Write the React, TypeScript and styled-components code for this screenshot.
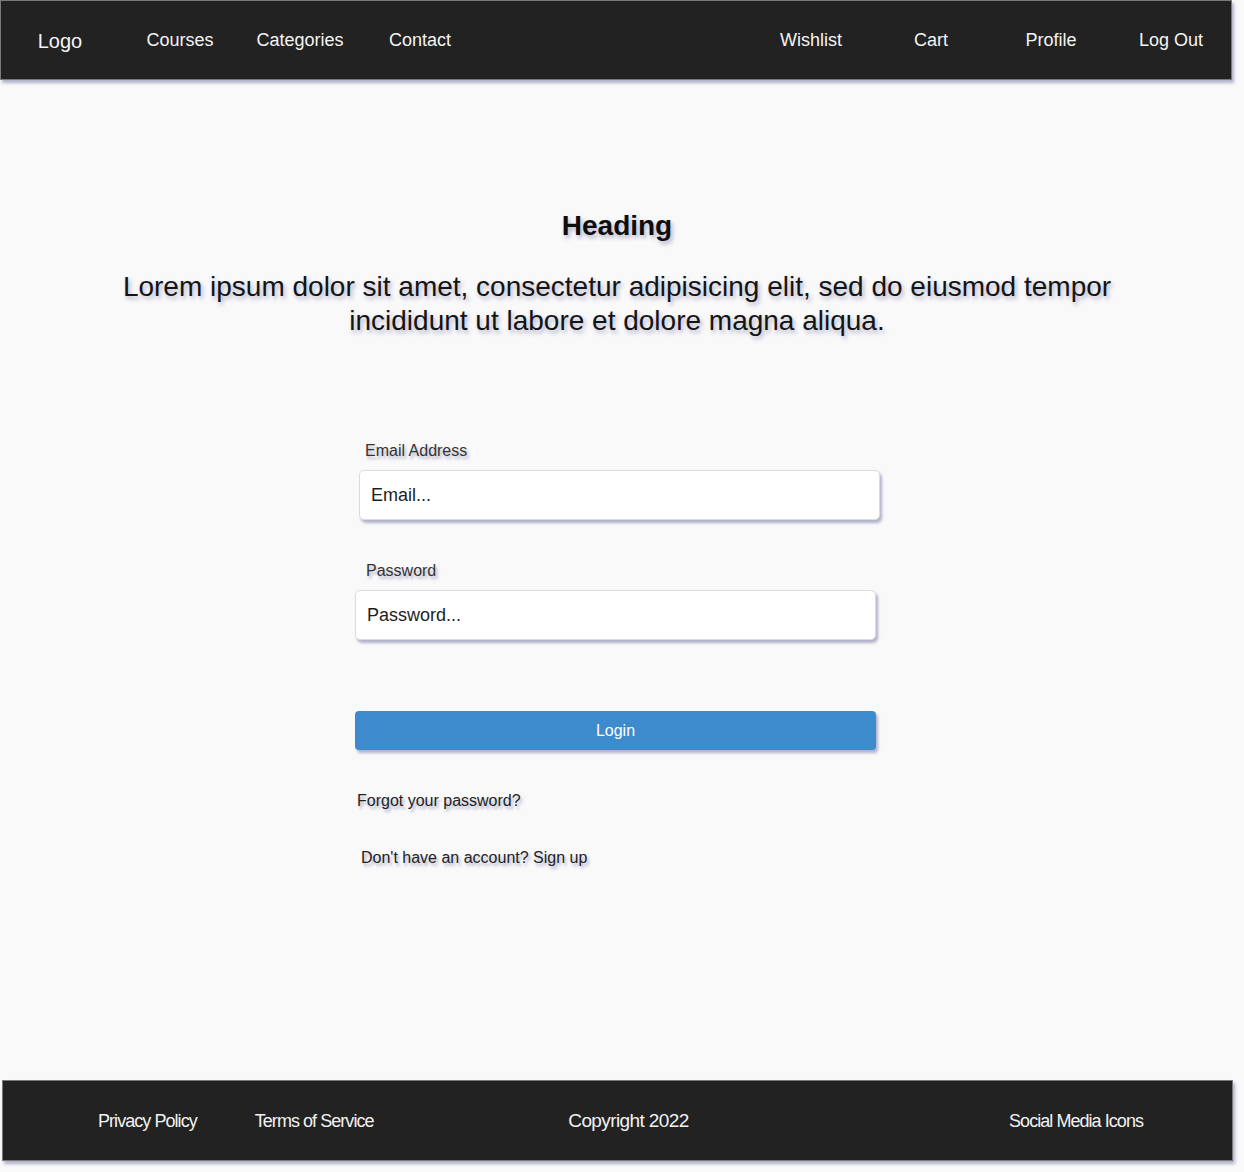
import React from 'react'
import styled, { createGlobalStyle } from 'styled-components'

const GlobalStyle = createGlobalStyle`
  * { box-sizing: border-box; }
  body {
    margin: 0;
    background: #f9f9fa;
    font-family: "Liberation Sans", Arial, sans-serif;
  }
`

const navLeft = ['Courses', 'Categories', 'Contact']
const navRight = ['Wishlist', 'Cart', 'Profile', 'Log Out']

const App = () => {
  return (
    <Page>
      <GlobalStyle />
      <NavBar>
        <NavGroup $shift={-1}>
          <NavItem $logo>Logo</NavItem>
          {navLeft.map((name) => (
            <NavItem key={name}>{name}</NavItem>
          ))}
        </NavGroup>
        <NavGroup $shift={0}>
          {navRight.map((name) => (
            <NavItem key={name}>{name}</NavItem>
          ))}
        </NavGroup>
      </NavBar>

      <Main>
        <Heading>Heading</Heading>
        <Intro>
          Lorem ipsum dolor sit amet, consectetur adipisicing elit, sed do eiusmod tempor
          incididunt ut labore et dolore magna aliqua.
        </Intro>

        <Form onSubmit={(e) => e.preventDefault()}>
          <Label $indent={10}>Email Address</Label>
          <Input type="email" placeholder="Email..." $shift={4} />
          <Label $indent={11} $top={42}>Password</Label>
          <Input type="password" placeholder="Password..." $shift={0} />
          <LoginButton type="submit">Login</LoginButton>
          <SmallText $indent={2} $top={42}>Forgot your password?</SmallText>
          <SmallText $indent={6} $top={39}>Don't have an account? Sign up</SmallText>
        </Form>
      </Main>

      <Footer>
        <FooterLinks>
          <FooterText>Privacy Policy</FooterText>
          <FooterText>Terms of Service</FooterText>
        </FooterLinks>
        <Copyright>Copyright 2022</Copyright>
        <FooterRight>
          <FooterText>Social Media Icons</FooterText>
        </FooterRight>
      </Footer>
    </Page>
  )
}

const shadow = 'rgba(70, 70, 130, 0.4)'

const Page = styled.div`
  width: 1234px;
  min-height: 1172px;
`

const NavBar = styled.nav`
  width: 1232px;
  height: 80px;
  background: #222222;
  border: 1px solid #7a7a7a;
  box-shadow: 2px 3px 3px ${shadow};
  display: flex;
  justify-content: space-between;
  align-items: center;
`

const NavGroup = styled.div<{ $shift: number }>`
  display: flex;
  align-items: center;
  margin-left: ${(p) => p.$shift}px;
`

const NavItem = styled.a<{ $logo?: boolean }>`
  width: 120px;
  text-align: center;
  color: #f4f4f4;
  font-size: ${(p) => (p.$logo ? '20px' : '18px')};
  margin-top: ${(p) => (p.$logo ? '3px' : '0')};
  cursor: pointer;
`

const Main = styled.main`
  display: flex;
  flex-direction: column;
  align-items: center;
  padding-top: 130px;
  height: 1000px;
`

const Heading = styled.h1`
  margin: 0;
  font-size: 28px;
  line-height: 32px;
  font-weight: 700;
  color: #0d0d0d;
  text-shadow: 2px 3px 4px ${shadow};
`

const Intro = styled.p`
  margin: 28px 0 0;
  width: 1010px;
  text-align: center;
  font-size: 28px;
  line-height: 34px;
  color: #141414;
  text-shadow: 2px 3px 4px ${shadow};
`

const Form = styled.form`
  width: 524px;
  margin-top: 104px;
  display: flex;
  flex-direction: column;
  align-items: flex-start;
`

const Label = styled.label<{ $indent: number; $top?: number }>`
  margin: ${(p) => p.$top ?? 0}px 0 10px ${(p) => p.$indent}px;
  font-size: 16px;
  line-height: 18px;
  color: #333;
  text-shadow: 2px 3px 3px ${shadow};
`

const Input = styled.input<{ $shift: number }>`
  margin-left: ${(p) => p.$shift}px;
  width: 521px;
  height: 50px;
  padding: 0 11px;
  border: 1px solid #dcdcdf;
  border-radius: 5px;
  background: #ffffff;
  box-shadow: 2px 3px 3px ${shadow};
  font-family: "Liberation Sans", Arial, sans-serif;
  font-size: 18px;
  color: #222;
  outline: none;
  &::placeholder {
    color: #1e1e1e;
  }
`

const LoginButton = styled.button`
  margin-top: 71px;
  width: 521px;
  height: 39px;
  border: none;
  border-radius: 4px;
  background: #3d8bcd;
  box-shadow: 2px 3px 3px ${shadow};
  color: #ffffff;
  font-family: "Liberation Sans", Arial, sans-serif;
  font-size: 16px;
  cursor: pointer;
`

const SmallText = styled.a<{ $indent: number; $top: number }>`
  margin: ${(p) => p.$top}px 0 0 ${(p) => p.$indent}px;
  font-size: 16px;
  line-height: 18px;
  color: #222;
  text-shadow: 2px 3px 3px ${shadow};
  cursor: pointer;
`

const Footer = styled.footer`
  margin-left: 2px;
  width: 1231px;
  height: 81px;
  padding-top: 1px;
  background: #222222;
  border: 1px solid #7a7a7a;
  box-shadow: 2px 3px 3px ${shadow};
  display: grid;
  grid-template-columns: 1fr auto 1fr;
  align-items: center;
`

const FooterLinks = styled.div`
  display: flex;
  gap: 58px;
  padding-left: 95px;
`

const FooterRight = styled.div`
  justify-self: end;
  padding-right: 89px;
`

const FooterText = styled.a`
  color: #f2f2f2;
  font-size: 18px;
  letter-spacing: -0.95px;
  cursor: pointer;
`

const Copyright = styled.span`
  margin-left: 22px;
  color: #f2f2f2;
  font-size: 19px;
  letter-spacing: -0.6px;
`

export default App
